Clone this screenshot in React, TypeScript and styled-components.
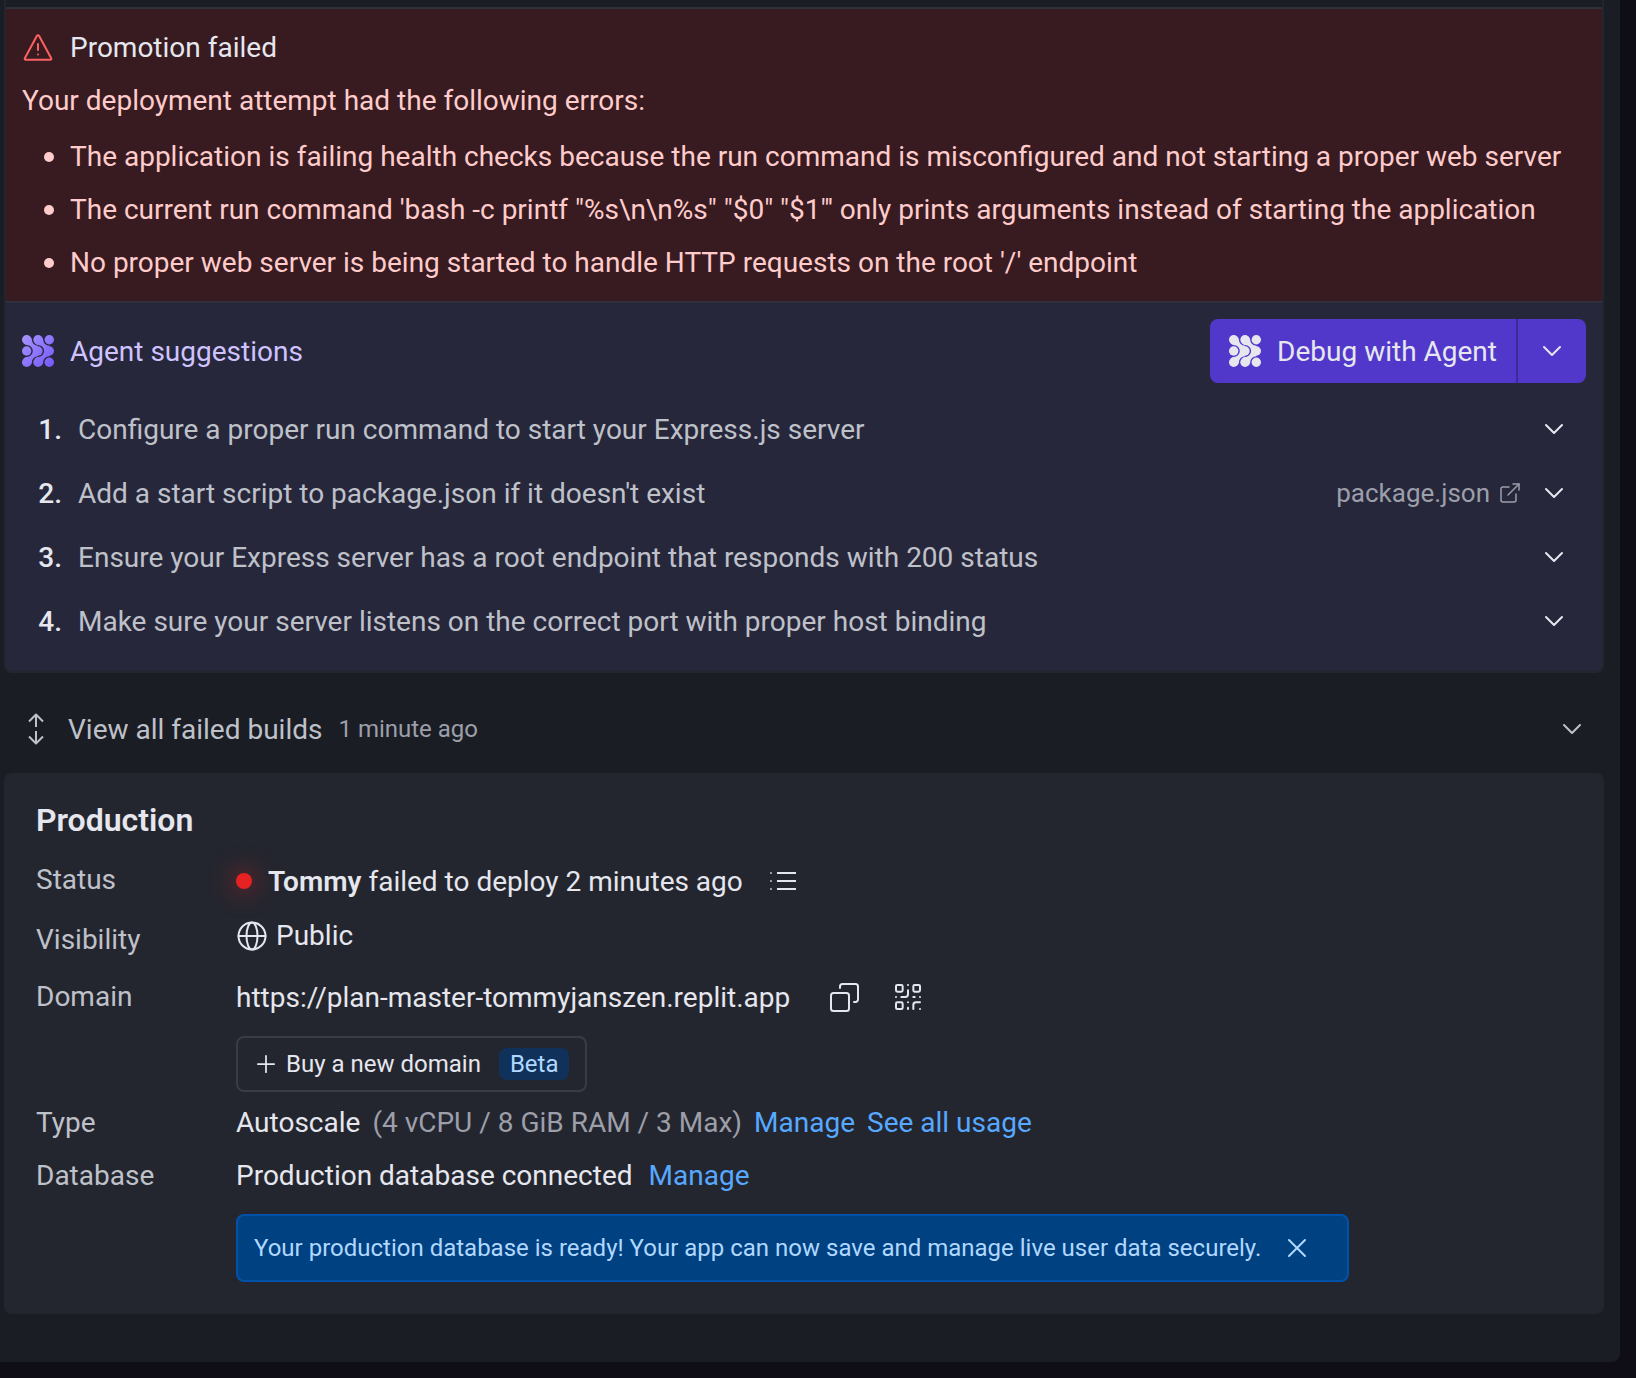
import React from 'react';
import styled, { createGlobalStyle } from 'styled-components';
import { ChevronDown, ExternalLink, Plus, QrCode, X } from 'lucide-react';

const color = {
  page: '#0f0e16',
  panel: '#1b1d25',
  card: '#24262f',
  line: '#2f303c',
  cardLine: '#24262f',
  text: '#e6e7ee',
  dim: '#bfc1c9',
  dimmer: '#9c9faa',
  red: '#ff6161',
  redText: '#ffcccb',
  redBg: '#371b21',
  purpleBg: '#27273c',
  purpleText: '#cfc3ff',
  purpleButton: '#5138cb',
  purpleButtonLine: '#3c2b96',
  link: '#57a9ff',
  blueBg: '#004182',
  blueLine: '#0052a8',
  blueText: '#b0d8ff',
  betaBg: '#10315a',
};

const GlobalStyle = createGlobalStyle`
  *, *::before, *::after { box-sizing: border-box; }
  body {
    margin: 0;
    background: ${color.page};
    color: ${color.text};
    font: 400 28px/45px Roboto, "Liberation Sans", sans-serif;
  }
  button { font: inherit; color: inherit; background: none; border: 0; padding: 0; cursor: pointer; }
  h2, p, ul, ol, dl, dd { margin: 0; padding: 0; }
  ul, ol { list-style: none; }
  svg { display: block; flex: none; }
`;

const Panel = styled.main`
  margin-right: 16px;
  padding: 0 16px 48px 4px;
  background: ${color.panel};
  border-bottom-right-radius: 8px;
`;

const FailureCard = styled.section`
  padding-top: 7px;
  border: 2px solid ${color.cardLine};
  border-top: 0;
  border-radius: 0 0 8px 8px;
  overflow: hidden;
`;

const ErrorSection = styled.div`
  padding: 16px;
  background: ${color.redBg};
  color: ${color.redText};
  border-top: 2px solid ${color.line};
`;

const Heading = styled.h2<{ $tone?: string }>`
  display: flex;
  align-items: center;
  gap: 16px;
  font-size: 28px;
  font-weight: 400;
  color: ${(p) => p.$tone ?? color.text};
`;

const ErrorIntro = styled.p`
  margin-top: 8px;
`;

const ErrorList = styled.ul`
  display: flex;
  flex-direction: column;
  gap: 8px;
  margin-top: 11px;
  padding-left: 22px;
`;

const ErrorItem = styled.li`
  display: flex;
  align-items: flex-start;
  gap: 16px;

  &::before {
    content: '';
    flex: none;
    width: 10px;
    height: 10px;
    margin-top: 18px;
    border-radius: 50%;
    background: currentColor;
  }
`;

const AgentSection = styled.div`
  padding: 16px 16px 20px;
  background: ${color.purpleBg};
  border-top: 2px solid ${color.line};
`;

const AgentHeader = styled.div`
  display: flex;
  align-items: center;
  justify-content: space-between;
`;

const SplitButton = styled.div`
  display: flex;
  height: 64px;
  border-radius: 8px;
  overflow: hidden;
  background: ${color.purpleButton};
`;

const DebugButton = styled.button`
  display: flex;
  align-items: center;
  gap: 16px;
  padding: 0 19px;
`;

const DebugMenuButton = styled.button`
  display: flex;
  align-items: center;
  padding: 0 18px;
  border-left: 2px solid ${color.purpleButtonLine};
`;

const SuggestionList = styled.ol`
  display: flex;
  flex-direction: column;
  gap: 4px;
  margin-top: 16px;
`;

const Suggestion = styled.li`
  display: flex;
  align-items: center;
  gap: 16px;
  height: 60px;
  padding: 0 16px;
`;

const SuggestionNumber = styled.span`
  width: 24px;
  text-align: right;
  font-weight: 500;
`;

const SuggestionText = styled.span`
  flex: 1;
  color: ${color.dim};
`;

const FileLink = styled.a`
  display: flex;
  align-items: center;
  gap: 8px;
  font-size: 26px;
  color: ${color.dimmer};
  text-decoration: none;
`;

const BuildsRow = styled.button`
  display: flex;
  align-items: center;
  gap: 16px;
  width: 100%;
  height: 64px;
  margin: 24px 0 12px;
  padding: 0 16px;
  color: ${color.dim};
  text-align: left;
`;

const BuildsTime = styled.span`
  flex: 1;
  font-size: 24px;
  color: ${color.dimmer};
`;

const ProductionCard = styled.section`
  padding: 24px 32px 32px;
  border-radius: 8px;
  background: ${color.card};
`;

const CardTitle = styled.h2`
  margin-bottom: 14px;
  font-size: 32px;
  font-weight: 600;
  line-height: 46px;
`;

const Details = styled.dl`
  display: grid;
  grid-template-columns: 200px 1fr;
  gap: 8px 0;
`;

const Term = styled.dt<{ $middle?: boolean }>`
  align-self: ${(p) => (p.$middle ? 'center' : 'start')};
  color: ${color.dim};
`;

const Value = styled.dd<{ $tall?: boolean }>`
  display: flex;
  flex-direction: column;
  align-items: flex-start;
  gap: 16px;
  min-height: ${(p) => (p.$tall ? '53px' : '45px')};
`;

const Line = styled.div<{ $gap?: number; $height?: number }>`
  display: flex;
  align-items: center;
  gap: ${(p) => p.$gap ?? 16}px;
  min-height: ${(p) => p.$height ?? 45}px;
`;

const StatusDot = styled.span`
  width: 16px;
  height: 16px;
  border-radius: 50%;
  background: #e62222;
  box-shadow: 0 0 24px 2px rgba(230, 34, 34, 0.55);
`;

const Strong = styled.strong`
  font-weight: 600;
`;

const IconButton = styled.button<{ $width?: number }>`
  display: flex;
  align-items: center;
  justify-content: center;
  width: ${(p) => p.$width ?? 32}px;
  height: 32px;
`;

const SiteLink = styled.a`
  min-width: 568px;
  color: ${color.text};
  text-decoration: none;
`;

const TextLink = styled.a`
  color: ${color.link};
  text-decoration: none;
`;

const Muted = styled.span`
  color: ${color.dimmer};
`;

const BuyButton = styled.button`
  display: flex;
  align-items: center;
  gap: 6px;
  height: 56px;
  padding: 0 16px 0 14px;
  border: 2px solid #3a3b47;
  border-radius: 8px;
  font-size: 24px;
`;

const Badge = styled.span`
  margin-left: 12px;
  padding: 0 11px;
  border-radius: 8px;
  background: ${color.betaBg};
  color: ${color.blueText};
  line-height: 32px;
`;

const Notice = styled.div`
  display: flex;
  align-items: center;
  gap: 20px;
  padding: 16px 34px 16px 16px;
  border: 2px solid ${color.blueLine};
  border-radius: 8px;
  background: ${color.blueBg};
  color: ${color.blueText};
  font-size: 24px;
  line-height: 32px;
`;

const stroke = {
  fill: 'none',
  stroke: 'currentColor',
  strokeWidth: 2,
  strokeLinecap: 'round' as const,
  strokeLinejoin: 'round' as const,
};

const AgentLogo = ({ gradient }: { gradient?: boolean }) => {
  const dots = [4.7, 16, 27.3];
  return (
    <svg width="32" height="32" viewBox="0 0 32 32" fill={gradient ? 'url(#agent)' : color.text} aria-hidden="true">
      <defs>
        <linearGradient id="agent" gradientUnits="userSpaceOnUse" x1="0" y1="0" x2="32" y2="32">
          <stop offset="0" stopColor="#a995ff" />
          <stop offset="1" stopColor="#7357fb" />
        </linearGradient>
      </defs>
      {dots.flatMap((y) => dots.map((x) => <circle key={`${x}-${y}`} cx={x} cy={y} r="4.7" />))}
      <path d="M8 1.4Q9.9 3 9.9 4.7A6.1 6.1 0 0 0 16 10.8V21.2A6.1 6.1 0 0 0 9.9 27.3Q9.9 29 8 30.6L1.4 24Q3 22.1 4.7 22.1A6.1 6.1 0 0 0 4.7 9.900Q3 9.900 1.400 8Z" />
      <path d="M19.3 1.4Q21.2 3 21.2 4.7A6.1 6.1 0 0 0 27.3 10.8V21.2A6.1 6.1 0 0 0 21.2 27.3Q21.2 29 19.3 30.6L12.7 24Q14.3 22.1 16 22.1A6.1 6.1 0 0 0 16 9.9Q14.3 9.9 12.7 8Z" />
    </svg>
  );
};

const WarningIcon = () => (
  <svg width="32" height="32" viewBox="0 0 32 32" {...stroke} stroke={color.red} aria-hidden="true">
    <path d="M15.1 3.6a1.1 1.1 0 0 1 1.8 0L29.2 26.3a1 1 0 0 1-.9 1.5H3.7a1 1 0 0 1-.9-1.5Z" />
    <path d="M16 12v6M16 22.5v.1" />
  </svg>
);

const ExpandIcon = () => (
  <svg width="32" height="32" viewBox="0 0 32 32" {...stroke} strokeLinecap="butt" aria-hidden="true">
    <path d="M16 2v12M16 18v12M9 8.5 16 1.5l7 7M9 23.5l7 7 7-7" />
  </svg>
);

const GlobeIcon = () => (
  <svg width="32" height="32" viewBox="0 0 32 32" {...stroke} aria-hidden="true">
    <circle cx="16" cy="16" r="13.5" />
    <ellipse cx="16" cy="16" rx="5.5" ry="13.5" />
    <path d="M2.5 16h27" />
  </svg>
);

const ListIcon = () => (
  <svg width="32" height="32" viewBox="0 0 32 32" {...stroke} strokeLinecap="butt" aria-hidden="true">
    <path d="M10 8h19M10 16h19M10 24h19" />
    <path d="M3 8h2M3 16h2M3 24h2" opacity="0.6" />
  </svg>
);

const CopyIcon = () => (
  <svg width="32" height="32" viewBox="0 0 32 32" {...stroke} aria-hidden="true">
    <rect x="3" y="12" width="18" height="18" rx="2.5" />
    <path d="M12 7V5.5A2.5 2.5 0 0 1 14.5 3H27.5A2.5 2.5 0 0 1 30 5.5V18.5A2.5 2.5 0 0 1 27.5 21H26" />
  </svg>
);

const Chevron = () => <ChevronDown size={32} strokeWidth={1.5} aria-hidden="true" />;

const errors = [
  'The application is failing health checks because the run command is misconfigured and not starting a proper web server',
  `The current run command 'bash -c printf "%s\\n\\n%s" "$0" "$1"' only prints arguments instead of starting the application`,
  "No proper web server is being started to handle HTTP requests on the root '/' endpoint",
];

const suggestions: { text: string; file?: string }[] = [
  { text: 'Configure a proper run command to start your Express.js server' },
  { text: "Add a start script to package.json if it doesn't exist", file: 'package.json' },
  { text: 'Ensure your Express server has a root endpoint that responds with 200 status' },
  { text: 'Make sure your server listens on the correct port with proper host binding' },
];

export default function App() {
  return (
    <>
      <GlobalStyle />
      <Panel>
        <FailureCard>
          <ErrorSection>
            <Heading>
              <WarningIcon />
              Promotion failed
            </Heading>
            <ErrorIntro>Your deployment attempt had the following errors:</ErrorIntro>
            <ErrorList>
              {errors.map((error) => (
                <ErrorItem key={error}>{error}</ErrorItem>
              ))}
            </ErrorList>
          </ErrorSection>
          <AgentSection>
            <AgentHeader>
              <Heading $tone={color.purpleText}>
                <AgentLogo gradient />
                Agent suggestions
              </Heading>
              <SplitButton>
                <DebugButton type="button">
                  <AgentLogo />
                  Debug with Agent
                </DebugButton>
                <DebugMenuButton type="button" aria-label="More debug options">
                  <Chevron />
                </DebugMenuButton>
              </SplitButton>
            </AgentHeader>
            <SuggestionList>
              {suggestions.map((item, i) => (
                <Suggestion key={item.text}>
                  <SuggestionNumber>{i + 1}.</SuggestionNumber>
                  <SuggestionText>{item.text}</SuggestionText>
                  {item.file && (
                    <FileLink href="#file">
                      {item.file}
                      <ExternalLink size={24} strokeWidth={1.5} aria-hidden="true" />
                    </FileLink>
                  )}
                  <IconButton type="button" aria-label={`Expand suggestion ${i + 1}`}>
                    <Chevron />
                  </IconButton>
                </Suggestion>
              ))}
            </SuggestionList>
          </AgentSection>
        </FailureCard>

        <BuildsRow type="button">
          <ExpandIcon />
          View all failed builds
          <BuildsTime>1 minute ago</BuildsTime>
          <Chevron />
        </BuildsRow>

        <ProductionCard>
          <CardTitle>Production</CardTitle>
          <Details>
            <Term>Status</Term>
            <Value>
              <Line $height={48}>
                <StatusDot />
                <span>
                  <Strong>Tommy</Strong> failed to deploy 2 minutes ago
                </span>
                <IconButton type="button" $width={48} aria-label="View logs">
                  <ListIcon />
                </IconButton>
              </Line>
            </Value>

            <Term $middle>Visibility</Term>
            <Value $tall>
              <Line $gap={8}>
                <GlobeIcon />
                Public
              </Line>
            </Value>

            <Term>Domain</Term>
            <Value>
              <Line $height={46}>
                <SiteLink href="#site">https://plan-master-tommyjanszen.replit.app</SiteLink>
                <IconButton type="button" $width={48} aria-label="Copy address">
                  <CopyIcon />
                </IconButton>
                <IconButton type="button" $width={48} aria-label="Show QR code">
                  <QrCode size={32} strokeWidth={1.5} />
                </IconButton>
              </Line>
              <BuyButton type="button">
                <Plus size={28} strokeWidth={1.5} aria-hidden="true" />
                Buy a new domain
                <Badge>Beta</Badge>
              </BuyButton>
            </Value>

            <Term>Type</Term>
            <Value>
              <Line $gap={12}>
                Autoscale
                <Muted>(4 vCPU / 8 GiB RAM / 3 Max)</Muted>
                <TextLink href="#manage">Manage</TextLink>
                <TextLink href="#usage">See all usage</TextLink>
              </Line>
            </Value>

            <Term>Database</Term>
            <Value>
              <Line>
                Production database connected
                <TextLink href="#database">Manage</TextLink>
              </Line>
              <Notice role="status">
                Your production database is ready! Your app can now save and manage live user data securely.
                <IconButton type="button" aria-label="Dismiss">
                  <X size={32} strokeWidth={1.5} />
                </IconButton>
              </Notice>
            </Value>
          </Details>
        </ProductionCard>
      </Panel>
    </>
  );
}
